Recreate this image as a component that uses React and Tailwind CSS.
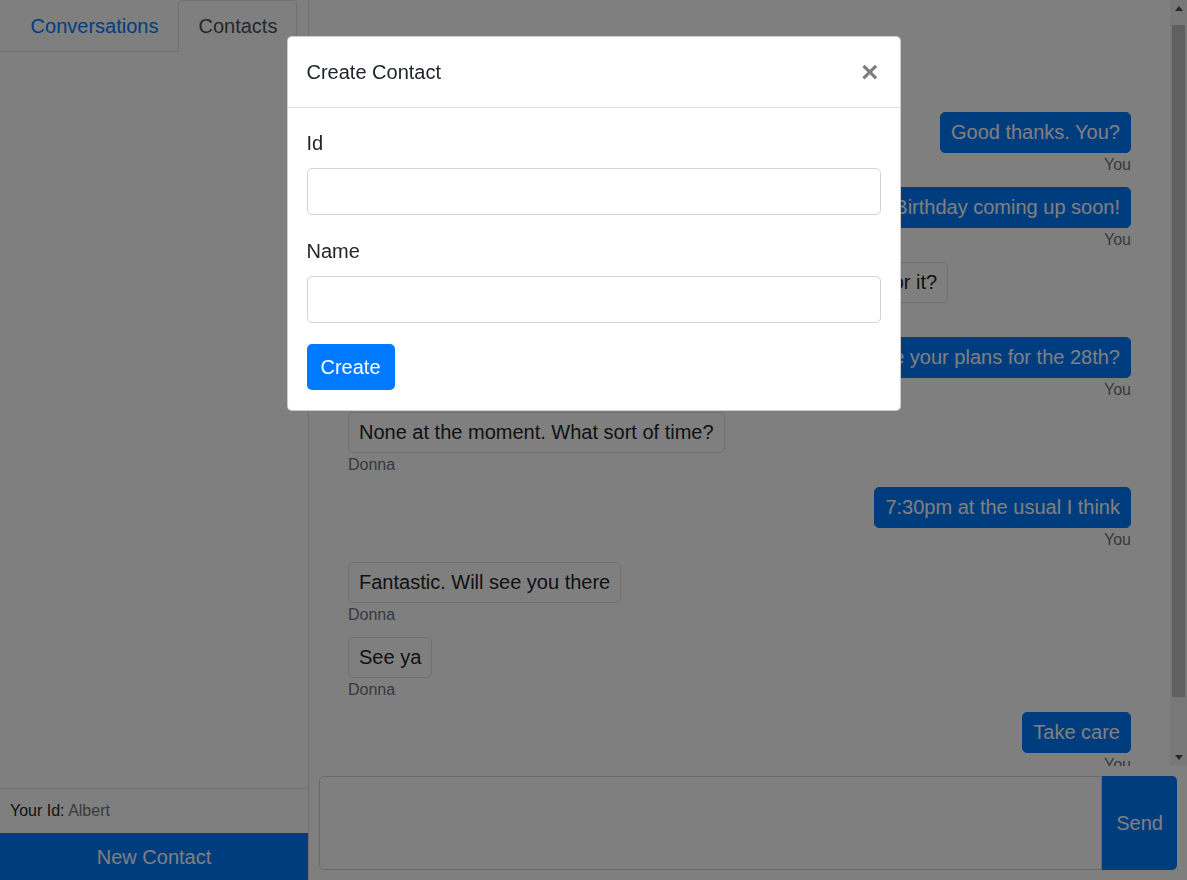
import { useEffect, useRef } from 'react';

const messages = [
  { sender: 'Donna', text: 'Hi Albert, how are you doing today?' },
  { sender: 'You', text: 'Good thanks. You?' },
  { sender: 'You', text: "Not bad. It's Jack's Birthday coming up soon!" },
  { sender: 'Donna', text: 'Oh yes I forgot! Are you planning on doing anything special for it?' },
  { sender: 'You', text: 'Not sure yet. What are your plans for the 28th?' },
  { sender: 'Donna', text: 'None at the moment. What sort of time?' },
  { sender: 'You', text: '7:30pm at the usual I think' },
  { sender: 'Donna', text: 'Fantastic. Will see you there' },
  { sender: 'Donna', text: 'See ya' },
  { sender: 'You', text: 'Take care' },
];

function Sidebar() {
  return (
    <div className="w-[309px] flex-shrink-0 flex flex-col border-r border-[#dee2e6]">
      {/* Tabs */}
      <div className="flex justify-center border-b border-[#dee2e6]">
        <button className="px-[19px] py-[10px] leading-[30px] text-[20px] text-[#007bff] border border-transparent -mb-px">
          Conversations
        </button>
        <button className="px-[19px] py-[10px] leading-[30px] text-[20px] text-[#495057] bg-white border border-[#dee2e6] border-b-white rounded-t-[5px] -mb-px">
          Contacts
        </button>
      </div>

      <div className="flex-1" />

      <div className="border-t border-[#dee2e6] px-[10px] py-[10px] text-[16px] leading-[24px] text-[#212529]">
        Your Id: <span className="text-[#6c757d]">Albert</span>
      </div>
      <button className="h-[47px] bg-[#007bff] text-white text-[20px] leading-[30px]">
        New Contact
      </button>
    </div>
  );
}

function ScrollBar() {
  return (
    <div className="w-[17px] flex-shrink-0 flex flex-col bg-[#f1f1f1]">
      <div className="h-[17px] flex items-center justify-center">
        <svg width="8" height="5" viewBox="0 0 8 5">
          <path d="M0 5 L4 0 L8 5 Z" fill="#505050" />
        </svg>
      </div>
      <div className="flex-1 flex flex-col">
        <div className="mt-[8px] h-[672px] mx-[2px] bg-[#c1c1c1]" />
      </div>
      <div className="h-[17px] flex items-center justify-center">
        <svg width="8" height="5" viewBox="0 0 8 5">
          <path d="M0 0 L8 0 L4 5 Z" fill="#505050" />
        </svg>
      </div>
    </div>
  );
}

function Chat() {
  const scrollRef = useRef(null);

  useEffect(() => {
    if (scrollRef.current) scrollRef.current.scrollTop = 9;
  }, []);

  return (
    <div className="flex-1 flex flex-col min-w-0">
      <div className="flex-1 flex min-h-0">
        <div ref={scrollRef} className="flex-1 overflow-hidden">
          <div className="flex flex-col items-start px-[39px] pt-[46px] pb-[46px]">
            {messages.map((m, i) => {
              const mine = m.sender === 'You';
              return (
                <div
                  key={i}
                  className={`flex flex-col ${mine ? 'self-end items-end' : 'items-start'} ${
                    i === messages.length - 1 ? '' : 'mb-[10px]'
                  }`}
                >
                  <div
                    className={`rounded-[5px] px-[10px] py-[5px] text-[20px] leading-[29px] border ${
                      mine
                        ? 'bg-[#007bff] border-[#007bff] text-white'
                        : 'border-[#dee2e6] text-[#212529]'
                    }`}
                  >
                    {m.text}
                  </div>
                  <div className="text-[16px] leading-[24px] text-[#6c757d]">{m.sender}</div>
                </div>
              );
            })}
          </div>
        </div>
        <ScrollBar />
      </div>

      {/* Message form */}
      <div className="m-[10px] flex h-[94px]">
        <textarea className="flex-1 resize-none border border-[#ced4da] rounded-l-[5px] outline-none" />
        <button className="px-[14px] bg-[#007bff] text-white text-[20px] rounded-r-[5px]">
          Send
        </button>
      </div>
    </div>
  );
}

function CreateContactModal() {
  return (
    <div className="fixed inset-0 z-50 bg-black/50 flex justify-center items-start pt-[36px]">
      <div className="w-[614px] bg-white rounded-[5px] border border-black/20">
        <div className="flex items-center justify-between px-[19px] py-[20px] border-b border-[#dee2e6]">
          <div className="text-[20px] leading-[30px] text-[#212529]">Create Contact</div>
          <button className="text-[30px] leading-none font-bold text-black opacity-50 mr-[2px]">
            ×
          </button>
        </div>
        <div className="px-[19px] py-[20px]">
          <div className="mb-[21px]">
            <label className="block text-[20px] leading-[30px] text-[#212529] mb-[10px]">Id</label>
            <input className="block w-full h-[47px] border border-[#ced4da] rounded-[5px] outline-none" />
          </div>
          <div className="mb-[21px]">
            <label className="block text-[20px] leading-[30px] text-[#212529] mb-[10px]">Name</label>
            <input className="block w-full h-[47px] border border-[#ced4da] rounded-[5px] outline-none" />
          </div>
          <button className="h-[46px] px-[14px] bg-[#007bff] text-white text-[20px] rounded-[5px]">
            Create
          </button>
        </div>
      </div>
    </div>
  );
}

export default function App() {
  return (
    <div className="h-screen flex bg-white font-['Liberation_Sans',Arial,sans-serif] text-[#212529]">
      <Sidebar />
      <Chat />
      <CreateContactModal />
    </div>
  );
}
